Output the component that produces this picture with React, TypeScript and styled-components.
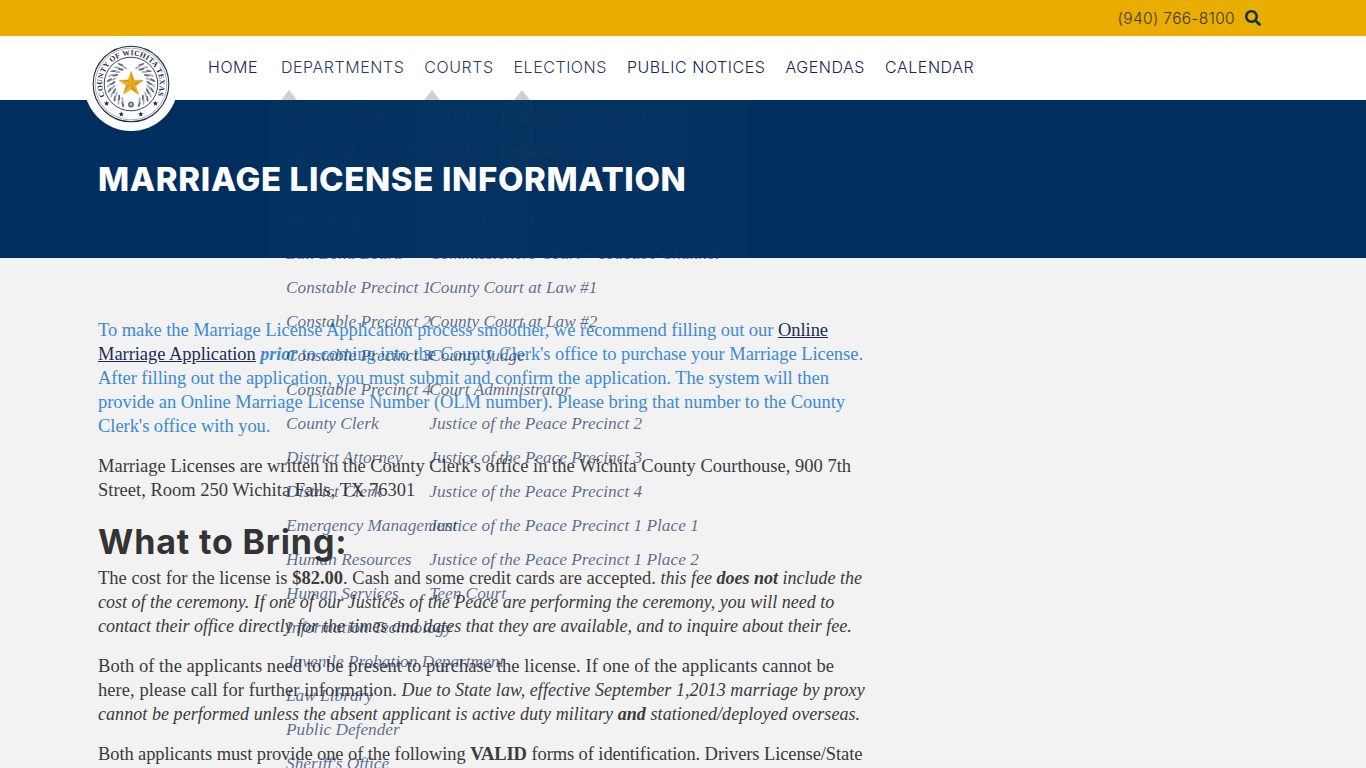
import styled, { createGlobalStyle } from "styled-components";
import { FaSearch } from "react-icons/fa";

const navy = "#002f5f";

const departments = [
  "Adult Probation",
  "Appraisal District",
  "Auditor",
  "Budget Office",
  "Bail Bond Board",
  "Constable Precinct 1",
  "Constable Precinct 2",
  "Constable Precinct 3",
  "Constable Precinct 4",
  "County Clerk",
  "District Attorney",
  "District Clerk",
  "Emergency Management",
  "Human Resources",
  "Human Services",
  "Information Technology",
  "Juvenile Probation Department",
  "Law Library",
  "Public Defender",
  "Sheriff's Office",
];

const courts = [
  "30th District Court",
  "78th District Court",
  "89th District Court",
  "Commissioners Court",
  "Commissioners Court – YouTube Channel",
  "County Court at Law #1",
  "County Court at Law #2",
  "County Judge",
  "Court Administrator",
  "Justice of the Peace Precinct 2",
  "Justice of the Peace Precinct 3",
  "Justice of the Peace Precinct 4",
  "Justice of the Peace Precinct 1 Place 1",
  "Justice of the Peace Precinct 1 Place 2",
  "Teen Court",
];

const elections = ["Election Information", "Election Results"];

const navItems: { label: string; menu?: string[] }[] = [
  { label: "HOME" },
  { label: "DEPARTMENTS", menu: departments },
  { label: "COURTS", menu: courts },
  { label: "ELECTIONS", menu: elections },
  { label: "PUBLIC NOTICES" },
  { label: "AGENDAS" },
  { label: "CALENDAR" },
];

function Seal() {
  // two rows of leaves up each side of the wreath
  const leaves: { side: number; angle: number; radius: number; dark: boolean }[] = [];
  [-1, 1].forEach((side) => {
    for (let step = 0; step < 11; step++) {
      const angle = 22 + step * 13;
      leaves.push({ side, angle, radius: 22.5, dark: step % 2 === 0 });
      leaves.push({ side, angle: angle + 6, radius: 18.5, dark: step % 2 === 1 });
    }
  });
  return (
    <svg width="78" height="78" viewBox="0 0 80 80">
      <defs>
        <path id="sealText" d="M 13.3 52.5 A 29.5 29.5 0 1 1 66.7 52.5" />
      </defs>
      <circle cx="40" cy="40" r="38.8" fill="#fff" stroke="#1d2b45" strokeWidth="1.1" />
      <circle cx="40" cy="40" r="36.8" fill="none" stroke="#1d2b45" strokeWidth="0.4" />
      <circle cx="40" cy="40" r="27.5" fill="none" stroke="#1d2b45" strokeWidth="0.9" />
      <text fontFamily="'Liberation Serif', serif" fontSize="7.8" fontWeight="700" fill="#1d2b45">
        <textPath href="#sealText" textLength="117" lengthAdjust="spacing">
          COUNTY OF WICHITA TEXAS
        </textPath>
      </text>
      {[[15, 60], [30, 71], [50, 71], [65, 60]].map(([x, y]) => (
        <path
          key={x}
          transform={`translate(${x} ${y})`}
          d="M0 -2.8 L.8 -.9 L2.7 -.9 L1.2 .4 L1.7 2.4 L0 1.2 L-1.7 2.4 L-1.2 .4 L-2.7 -.9 L-.8 -.9 Z"
          fill="#1d2b45"
        />
      ))}
      {leaves.map(({ side, angle, radius, dark }) => (
        <ellipse
          key={`${side}-${angle}-${radius}`}
          cx="40"
          cy={40 - radius}
          rx="1"
          ry="3.2"
          fill={dark ? "#5a687f" : "#a5aeba"}
          transform={`rotate(${side * (180 - angle)} 40 40) rotate(${side * 40} 40 ${40 - radius})`}
        />
      ))}
      <circle cx="40" cy="61" r="3" fill="#5a687f" />
      <circle cx="40" cy="61" r="1.4" fill="#c3cad4" />
      <g transform="translate(40 39) scale(0.84) translate(-40 -40)">
        <path
          d="M40 25 L43.9 36 L55.5 36.2 L46.2 43.2 L49.6 54.4 L40 47.8 L30.4 54.4 L33.8 43.2 L24.5 36.2 L36.1 36 Z"
          fill="#f0b428"
        />
        <path
          d="M40 25 L43.9 36 L40 40 Z M55.5 36.2 L46.2 43.2 L40 40 Z M49.6 54.4 L40 47.8 L40 40 Z M30.4 54.4 L33.8 43.2 L40 40 Z M24.5 36.2 L36.1 36 L40 40 Z"
          fill="#c58c12"
          opacity="0.6"
        />
      </g>
    </svg>
  );
}

export default function App() {
  return (
    <>
      <GlobalStyle />
      <TopBar>
        <Phone>(940) 766-8100</Phone>
        <SearchButton>
          <FaSearch size={16} />
        </SearchButton>
      </TopBar>

      <Header>
        <LogoBadge>
          <Seal />
        </LogoBadge>
        <Nav>
          {navItems.map((item) => (
            <NavItem key={item.label}>
              <NavLink $open={!!item.menu}>{item.label}</NavLink>
              {item.menu && (
                <>
                  <MenuArrow />
                  <Dropdown>
                    {item.menu.map((entry) => (
                      <DropdownItem key={entry}>{entry}</DropdownItem>
                    ))}
                  </Dropdown>
                </>
              )}
            </NavItem>
          ))}
        </Nav>
      </Header>

      <Hero>
        <PageTitle>MARRIAGE LICENSE INFORMATION</PageTitle>
      </Hero>

      <Content>
        <Notice $tracking={-0.05}>
          To make the Marriage License Application process smoother, we recommend filling out our{" "}
          <InlineLink>Online</InlineLink>
          <br />
          <InlineLink>Marriage Application</InlineLink> <strong><em>prior</em></strong> to coming into the County Clerk's
          office to purchase your Marriage License.
          <br />
          After filling out the application, you must submit and confirm the application. The system will then
          <br />
          provide an Online Marriage License Number (OLM number). Please bring that number to the County
          <br />
          Clerk's office with you.
        </Notice>
        <Paragraph>
          Marriage Licenses are written in the County Clerk's office in the Wichita County Courthouse, 900 7th
          <br />
          Street, Room 250 Wichita Falls, TX 76301
        </Paragraph>
        <SectionTitle>What to Bring:</SectionTitle>
        <Paragraph>
          The cost for the license is <strong>$82.00</strong>. Cash and some credit cards are accepted.{" "}
          <em>
            this fee <strong>does not</strong> include the
            <br />
            cost of the ceremony. If one of our Justices of the Peace are performing the ceremony, you will need to
            <br />
            contact their office directly for the times and dates that they are available, and to inquire about their fee.
          </em>
        </Paragraph>
        <Paragraph $tracking={0.06}>
          Both of the applicants need to be present to purchase the license. If one of the applicants cannot be
          <br />
          here, please call for further information.{" "}
          <em>
            Due to State law, effective September 1,2013 marriage by proxy
            <br />
            cannot be performed unless the absent applicant is active duty military <strong>and</strong>{" "}
            stationed/deployed overseas.
          </em>
        </Paragraph>
        <Paragraph $tracking={-0.1}>
          Both applicants must provide one of the following <strong>VALID</strong> forms of identification. Drivers
          License/State
        </Paragraph>
      </Content>
    </>
  );
}

const GlobalStyle = createGlobalStyle`
  html, body {
    margin: 0;
    height: 768px;
    overflow: hidden;
    background: #f2f2f2;
  }
  body {
    font-family: "Liberation Serif", serif;
  }
`;

const TopBar = styled.div`
  height: 36px;
  background: #e9ad00;
  display: flex;
  align-items: center;
  justify-content: flex-end;
  gap: 10px;
  padding-right: 105px;
`;

const Phone = styled.span`
  font-family: Inter, sans-serif;
  font-size: 15.5px;
  font-weight: 300;
  letter-spacing: 0.35px;
  color: #3d3416;
`;

const SearchButton = styled.span`
  display: flex;
  color: #12344f;
`;

const Header = styled.header`
  height: 64px;
  background: #fff;
  display: flex;
  align-items: flex-start;
  padding-left: 84px;
  position: relative;
  z-index: 2;
`;

const LogoBadge = styled.div`
  flex: none;
  width: 94px;
  height: 94px;
  margin: 1px 30px 0 0;
  border-radius: 50%;
  background: #fff;
  display: flex;
  align-items: center;
  justify-content: center;
`;

const Nav = styled.nav`
  display: flex;
  gap: 20px;
`;

const NavItem = styled.div`
  position: relative;
  min-width: 53px;
  height: 64px;
  line-height: 62px;
`;

const NavLink = styled.a<{ $open: boolean }>`
  font-family: Inter, sans-serif;
  font-size: 16px;
  font-weight: 350;
  letter-spacing: 0.54px;
  white-space: nowrap;
  color: ${({ $open }) => ($open ? "#2a3c5c" : "#14264e")};
`;

const MenuArrow = styled.span`
  position: absolute;
  left: 0;
  bottom: 0;
  border-left: 8px solid transparent;
  border-right: 8px solid transparent;
  border-bottom: 10px solid #cfcfcf;
`;

const Dropdown = styled.ul`
  position: absolute;
  top: 64px;
  left: -12px;
  margin: 0;
  padding: 1px 29px 0 17px;
  list-style: none;
  background: rgba(255, 255, 255, 0.01);
`;

const DropdownItem = styled.li`
  height: 34px;
  line-height: 34px;
  white-space: nowrap;
  font-family: "Liberation Serif", serif;
  font-style: italic;
  font-size: 17.3px;
  color: rgba(20, 50, 95, 0.7);
`;

const Hero = styled.section`
  height: 158px;
  background: ${navy};
  padding: 0 98px;
  display: flex;
  align-items: center;
`;

const PageTitle = styled.h1`
  position: relative;
  z-index: 3;
  margin: 0;
  font-family: Inter, sans-serif;
  font-size: 33px;
  font-weight: 800;
  letter-spacing: 0.65px;
  color: #fff;
  white-space: nowrap;
`;

const Content = styled.main`
  padding: 60px 0 0 98px;
  font-size: 18.5px;
  line-height: 24px;
  color: #3a3a3a;

  em {
    font-size: 18px;
  }
`;

const Paragraph = styled.p<{ $tracking?: number }>`
  margin: 0 0 16px;
  white-space: nowrap;
  letter-spacing: ${({ $tracking = 0 }) => $tracking}px;
`;

const Notice = styled(Paragraph)`
  color: #3a8ad6;
`;

const InlineLink = styled.a`
  color: #1b2d55;
  text-decoration: underline;
`;

const SectionTitle = styled.h2`
  margin: 22px 0 6px;
  height: 36px;
  line-height: 36px;
  font-family: Inter, sans-serif;
  font-size: 34px;
  font-weight: 700;
  letter-spacing: 0.85px;
  color: #333;
`;
